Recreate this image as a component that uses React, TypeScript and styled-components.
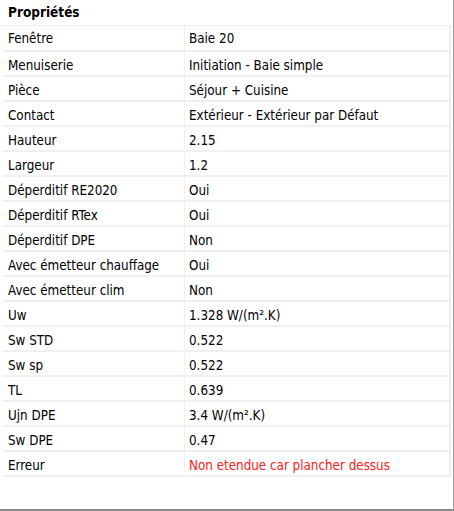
import React from "react";
import styled, { createGlobalStyle } from "styled-components";

const Global = createGlobalStyle`
  html, body { margin: 0; padding: 0; background: #ffffff; }
  body { font-family: "DejaVu Sans Condensed", "DejaVu Sans", sans-serif; }
`;

const Panel = styled.div`
  width: 454px;
  height: 511px;
  box-sizing: border-box;
  background: #ffffff;
  border-right: 1px solid #a0a0a0;
  border-bottom: 2px solid #8a8a8a;
  display: flex;
  flex-direction: column;
`;

const Title = styled.div`
  height: 26px;
  box-sizing: border-box;
  padding: 4px 0 0 8px;
  font-family: "DejaVu Sans Condensed", "DejaVu Sans", sans-serif;
  font-weight: bold;
  font-size: 13.5px;
  color: #000;
  border-bottom: 1px solid #ededed;
`;

const Table = styled.div`
  margin: 0 2px 0 3px;
  display: grid;
  grid-template-columns: 182px 1fr;
  border-right: 2px solid #ededed;
`;

const Cell = styled.div<{ $first?: boolean; $value?: boolean; $error?: boolean }>`
  height: ${(p) => (p.$first ? 26 : 25)}px;
  box-sizing: border-box;
  border-bottom: 2px solid #f0f0f0;
  border-right: ${(p) => (p.$value ? "none" : "1px solid #f0f0f0")};
  padding-left: ${(p) => (p.$value ? 4 : 5)}px;
  padding-top: ${(p) => (p.$first ? 1 : 4)}px;
  display: flex;
  align-items: center;
  font-size: 13.3px;
  color: ${(p) => (p.$error ? "#ff2020" : "#000")};
  white-space: nowrap;
`;

const rows: [string, string, boolean?][] = [
  ["Fenêtre", "Baie 20"],
  ["Menuiserie", "Initiation - Baie simple"],
  ["Pièce", "Séjour + Cuisine"],
  ["Contact", "Extérieur - Extérieur par Défaut"],
  ["Hauteur", "2.15"],
  ["Largeur", "1.2"],
  ["Déperditif RE2020", "Oui"],
  ["Déperditif RTex", "Oui"],
  ["Déperditif DPE", "Non"],
  ["Avec émetteur chauffage", "Oui"],
  ["Avec émetteur clim", "Non"],
  ["Uw", "1.328 W/(m².K)"],
  ["Sw STD", "0.522"],
  ["Sw sp", "0.522"],
  ["TL", "0.639"],
  ["Ujn DPE", "3.4 W/(m².K)"],
  ["Sw DPE", "0.47"],
  ["Erreur", "Non etendue car plancher dessus", true],
];

export default function App() {
  return (
    <>
      <Global />
      <Panel>
        <Title>Propriétés</Title>
        <Table>
          {rows.map(([k, v, err], i) => (
            <React.Fragment key={k}>
              <Cell $first={i === 0}>{k}</Cell>
              <Cell $value $first={i === 0} $error={err}>
                {v}
              </Cell>
            </React.Fragment>
          ))}
        </Table>
      </Panel>
    </>
  );
}
